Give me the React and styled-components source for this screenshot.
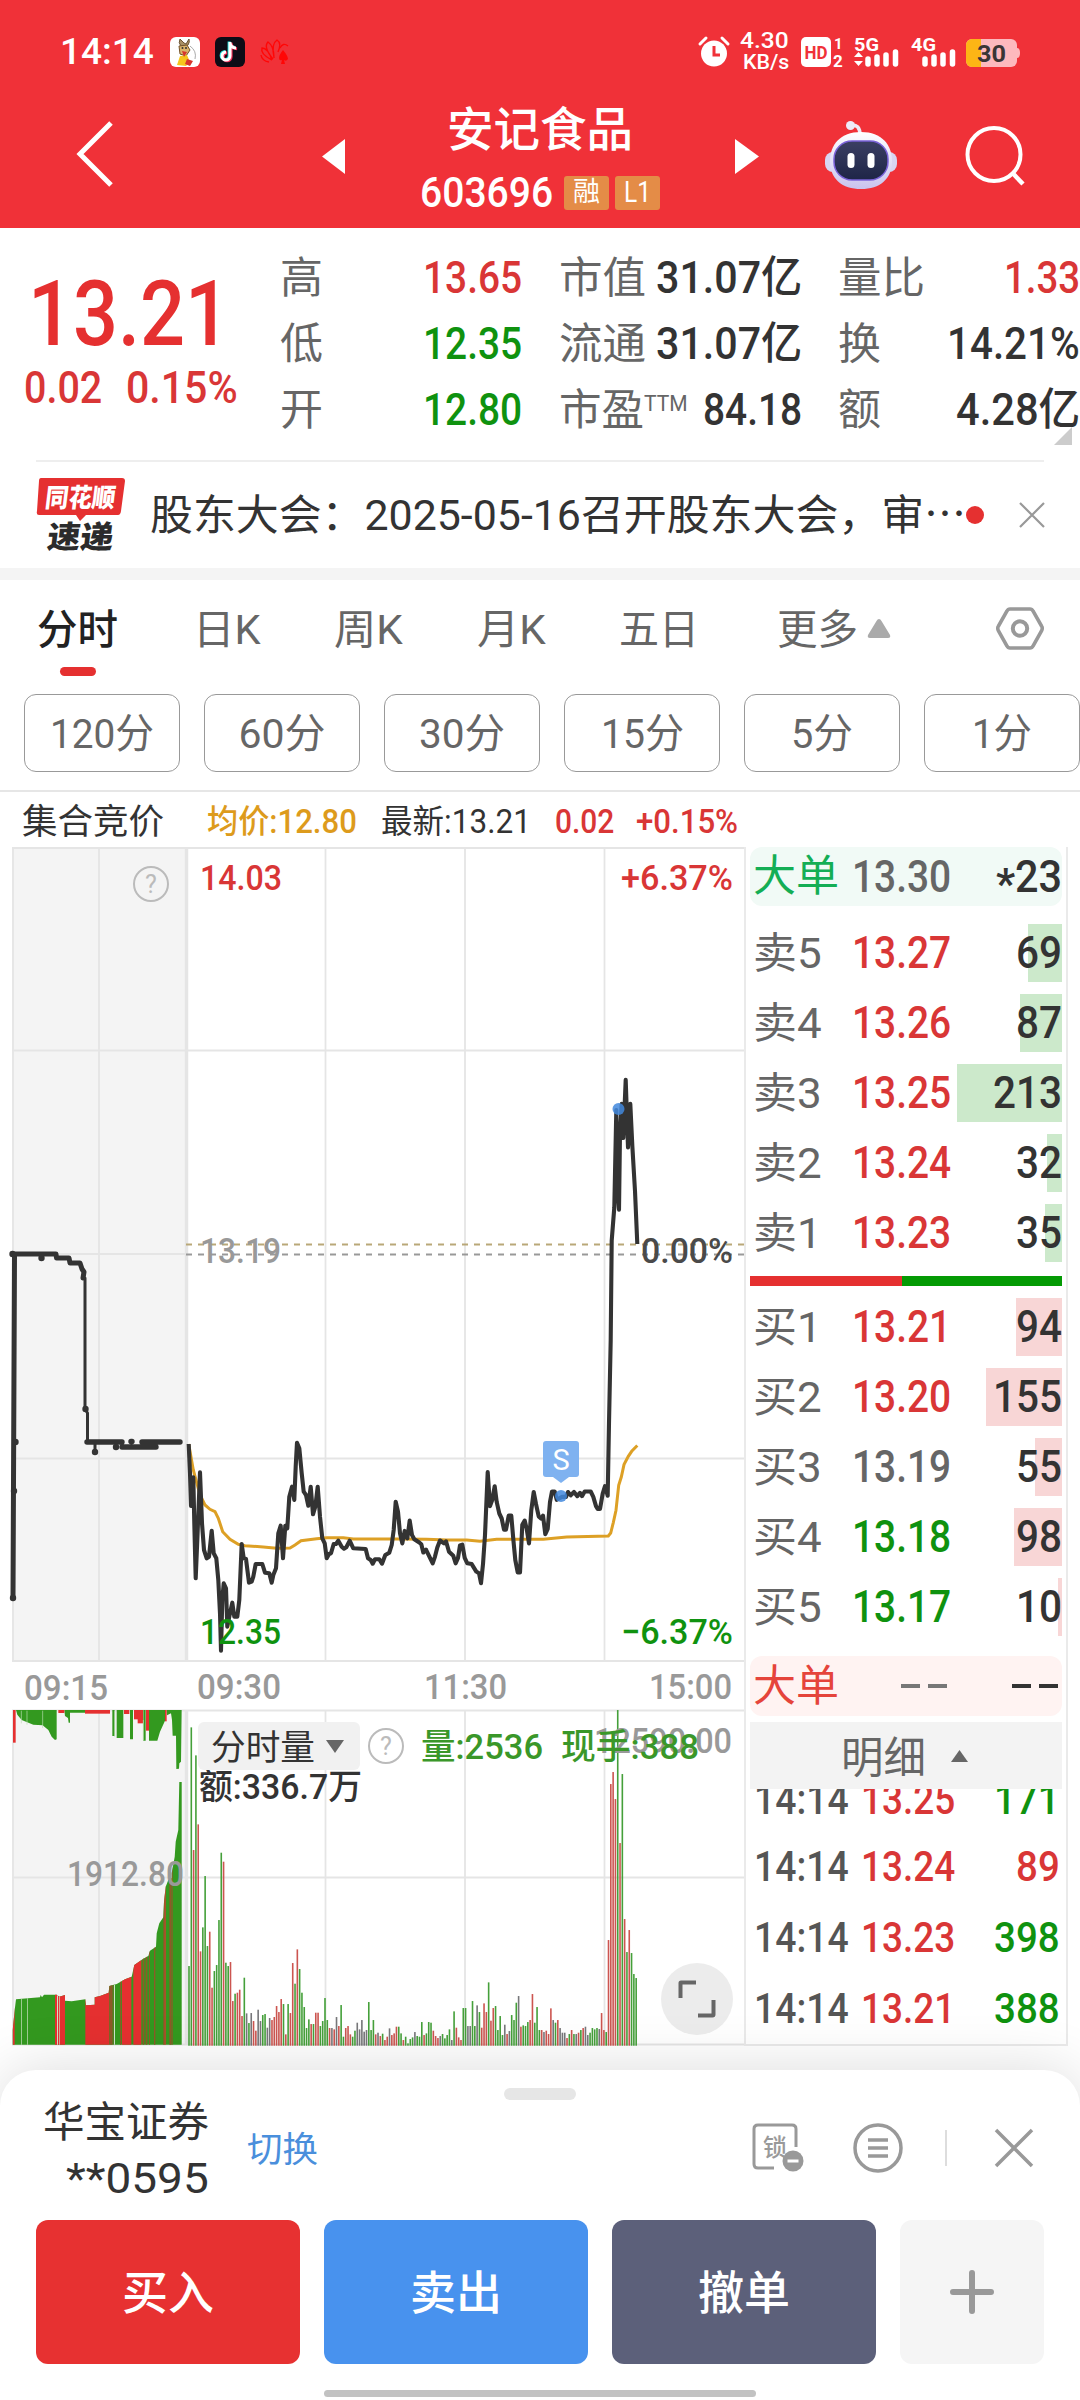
import React, { useLayoutEffect, useRef, useState } from "react";
import styled, { createGlobalStyle } from "styled-components";

const RED = "#d93636";
const GREEN = "#0f920f";
const INK = "#333";
const GREY = "#666";

const Global = createGlobalStyle`
  * { box-sizing: border-box; }
  body { margin: 0; background: #fff; font-family: Roboto, "Noto Sans CJK SC", sans-serif; }
  svg { overflow: visible; flex: none; }
`;

const Screen = styled.div`
  width: 1080px;
  height: 2400px;
  overflow: hidden;
  background: #fff;
  display: flex;
  flex-direction: column;
`;

/* ---------- condensed text ---------- */

const FitBox = styled.span`
  display: block;
  flex: none;
  width: ${(p) => p.$w}px;
  height: ${(p) => p.$size}px;
  line-height: ${(p) => p.$size}px;
  font-size: ${(p) => p.$size}px;
  font-weight: ${(p) => p.$weight};
  color: ${(p) => p.$color};
  margin-left: ${(p) => p.$ml || 0}px;
  position: relative;
  top: ${(p) => p.$dy || 0}px;
  white-space: pre;
`;
const FitInner = styled.span`
  display: inline-block;
  transform-origin: left center;
`;

function Fit({ w, size = 44, weight = 500, color = INK, ml, dy, children }) {
  const ref = useRef(null);
  const [scale, setScale] = useState(1);
  useLayoutEffect(() => {
    setScale(w / ref.current.offsetWidth);
  }, [w, size, children]);
  return (
    <FitBox $w={w} $size={size} $weight={weight} $color={color} $ml={ml} $dy={dy}>
      <FitInner ref={ref} style={{ transform: `scaleX(${scale})` }}>{children}</FitInner>
    </FitBox>
  );
}

/* ---------- header ---------- */

const Header = styled.header`
  flex: none;
  height: 228px;
  background: #f03138;
  display: flex;
  flex-direction: column;
`;
const StatusBar = styled.div`
  height: 100px;
  display: flex;
  align-items: center;
  padding: 3px 60px 0 60px;
`;
const Spacer = styled.div`
  flex: 1;
`;
const NetSpeed = styled.div`
  display: flex;
  flex-direction: column;
  align-items: flex-end;
  width: 60px;
  margin-right: 12px;
`;
const TitleBar = styled.div`
  height: 128px;
  display: flex;
  align-items: flex-start;
`;
const TitleBlock = styled.div`
  width: 390px;
  display: flex;
  flex-direction: column;
  align-items: center;
  padding-top: 5px;
`;
const CodeRow = styled.div`
  display: flex;
  align-items: center;
  margin-top: 20px;
`;
const Badge = styled.span`
  width: 45px;
  height: 34px;
  border-radius: 3px;
  background: #e48c47;
  display: flex;
  align-items: center;
  justify-content: center;
  margin-left: ${(p) => p.$ml}px;
`;

const RabbitIcon = () => (
  <svg width="30" height="30" viewBox="0 0 30 30">
    <rect width="30" height="30" rx="6" fill="#fff" />
    <path d="M10 2q-2 4 1 7l3 1 4-2q2-3 1-6l-3 5-2-1z" fill="#a89066" stroke="#6b5535" strokeWidth="1" />
    <path d="M9 9l8-1 3 5-4 6-6-2z" fill="#d9b26a" stroke="#73522a" strokeWidth="1" />
    <path d="M10 19l7-1 3 7-4 4-9-1z" fill="#f6c51c" />
    <path d="M12 14l5 1-3 5zM17 22l6 2-3 5-5-2z" fill="#d8352c" />
    <path d="M20 9q7 5 5 13" fill="none" stroke="#aaa" strokeWidth="1" />
    <circle cx="12.500" cy="11" r="1" fill="#333" />
    <circle cx="16" cy="11" r="1" fill="#333" />
  </svg>
);
const TikTokIcon = () => (
  <svg width="30" height="30" viewBox="0 0 30 30">
    <rect width="30" height="30" rx="6" fill="#0d0c16" />
    <g fill="none" strokeWidth="3">
      <path d="M15 5v14a4 4 0 1 1-4-4M15 6q1 5 6 5" stroke="#25e6e2" transform="translate(-.9 -.6)" />
      <path d="M15 5v14a4 4 0 1 1-4-4M15 6q1 5 6 5" stroke="#f5305a" transform="translate(1.1 .8)" />
      <path d="M15 5v14a4 4 0 1 1-4-4M15 6q1 5 6 5" stroke="#fff" />
    </g>
  </svg>
);
const FlowerIcon = () => (
  <svg width="30" height="26" viewBox="0 0 30 26">
    <g fill="none" stroke="#ff0606" strokeWidth="1.400">
      <path d="M12 21Q0 15 2 9Q8 9 12 21M13 20Q3 8 8 3Q14 7 14 19M14 18Q11 5 17 1Q22 4 18 13" />
      <path d="M9 23Q2 22 1 16M20 9Q23 3 28 7" />
    </g>
    <path d="M23 11q5 6 5 9q-2 3-4 1l1 4h-4l1-4q-3 1-3-2q0-3 4-8z" fill="#ff0606" />
  </svg>
);
const AlarmIcon = () => (
  <svg width="30" height="32" viewBox="0 0 30 32">
    <circle cx="15" cy="17.500" r="13" fill="#fff" />
    <path d="M1 8l6-6M29 8l-6-6" stroke="#fff" strokeWidth="3" strokeLinecap="round" />
    <path d="M15 10v9h6" fill="none" stroke="#f03138" strokeWidth="3" />
  </svg>
);
const HdIcon = () => (
  <svg width="42" height="32" viewBox="0 0 42 32">
    <rect x="0" y="1" width="30" height="30" rx="5" fill="#fff" />
    <text x="3.500" y="23" fontSize="19" fontWeight="700" fill="#f03138" textLength="23" lengthAdjust="spacingAndGlyphs">HD</text>
    <text x="33" y="13" fontSize="15" fontWeight="700" fill="#fff">1</text>
    <text x="32" y="31" fontSize="17" fontWeight="700" fill="#fff">2</text>
  </svg>
);
const SignalIcon = ({ label, arrows }) => (
  <svg width="46" height="32" viewBox="0 0 46 32">
    <text x="0" y="14.500" fontSize="18" fontWeight="700" fill="#fff" textLength="25" lengthAdjust="spacingAndGlyphs">{label}</text>
    {arrows && <path d="M0 21l4.500-5 4.500 5zM0 25l4.500 5 4.500-5z" fill="#fff" />}
    <path d="M14 28v-5M23 28v-7M32 28v-9M41.500 28v-12" stroke="#fff" strokeWidth="5.500" strokeLinecap="round" />
  </svg>
);
const BatteryIcon = () => (
  <svg width="54" height="28" viewBox="0 0 54 28">
    <rect x="0" y="0" width="51" height="28" rx="6" fill="#fdb9be" />
    <path d="M6 0h9v28H6a6 6 0 0 1-6-6V6a6 6 0 0 1 6-6z" fill="#fdb515" />
    <path d="M51 9q3 0 3 5t-3 5z" fill="#fdb9be" />
    <text x="11" y="22.500" fontSize="24" fontWeight="700" fill="#3a3535" textLength="29" lengthAdjust="spacingAndGlyphs">30</text>
  </svg>
);
const RobotIcon = () => (
  <svg width="74" height="72" viewBox="0 0 74 72">
    <defs>
      <linearGradient id="shell" x1="0" y1="0" x2="0" y2="1">
        <stop offset="0" stopColor="#fff" />
        <stop offset="1" stopColor="#c9c3ee" />
      </linearGradient>
      <linearGradient id="visor" x1="0" y1="0" x2="0" y2="1">
        <stop offset="0" stopColor="#3b3f63" />
        <stop offset="1" stopColor="#1e2547" />
      </linearGradient>
    </defs>
    <path d="M27 6Q36 5 36 16" fill="none" stroke="#eeeaf8" strokeWidth="3.500" />
    <circle cx="26.500" cy="6.500" r="4.500" fill="#eeeaf8" />
    <rect x="1" y="33" width="72" height="20" rx="8" fill="#d8d5f2" />
    <path d="M37 13C58 13 68 26 68 42C68 60 56 70 37 70C18 70 6 60 6 42C6 26 16 13 37 13z" fill="url(#shell)" />
    <rect x="10" y="22" width="54" height="39" rx="18" fill="url(#visor)" stroke="#7a62d8" strokeWidth="1.500" />
    <rect x="23.500" y="34" width="7" height="15" rx="3.500" fill="#fff" />
    <rect x="43.500" y="34" width="7" height="15" rx="3.500" fill="#fff" />
  </svg>
);

const IconSlot = styled.div`
  margin-left: ${(p) => p.$ml || 0}px;
  margin-top: ${(p) => p.$mt || 0}px;
  flex: none;
  line-height: 0;
`;

function TopHeader() {
  return (
    <Header>
      <StatusBar>
        <Fit w={94} size={37} color="#fff">14:14</Fit>
        <IconSlot $ml={16}><RabbitIcon /></IconSlot>
        <IconSlot $ml={15}><TikTokIcon /></IconSlot>
        <IconSlot $ml={15}><FlowerIcon /></IconSlot>
        <Spacer />
        <IconSlot><AlarmIcon /></IconSlot>
        <NetSpeed>
          <Fit w={49} size={22} color="#fff" dy={-1}>4.30</Fit>
          <Fit w={46} size={20} color="#fff" dy={-1}>KB/s</Fit>
        </NetSpeed>
        <IconSlot><HdIcon /></IconSlot>
        <IconSlot $ml={11}><SignalIcon label="5G" arrows /></IconSlot>
        <IconSlot $ml={11}><SignalIcon label="4G" /></IconSlot>
        <IconSlot $ml={9} $mt={3}><BatteryIcon /></IconSlot>
      </StatusBar>
      <TitleBar>
        <IconSlot $ml={74} $mt={18}>
          <svg width="42" height="70" viewBox="0 0 42 70"><path d="M37 5L6 36L37 67" fill="none" stroke="#fff" strokeWidth="5" /></svg>
        </IconSlot>
        <IconSlot $ml={206} $mt={39}>
          <svg width="23" height="35"><path d="M23 0v35L0 17.500z" fill="#fff" /></svg>
        </IconSlot>
        <TitleBlock>
          <Fit w={186} size={46.500} color="#fff" dy={2}>安记食品</Fit>
          <CodeRow>
            <Fit w={133} size={42} color="#fff">603696</Fit>
            <Badge $ml={11}><Fit w={27} size={27} weight={400} color="#fff">融</Fit></Badge>
            <Badge $ml={6}><Fit w={27} size={29} weight={400} color="#fff">L1</Fit></Badge>
          </CodeRow>
        </TitleBlock>
        <IconSlot $mt={39}>
          <svg width="24" height="35"><path d="M0 0v35L24 17.500z" fill="#fff" /></svg>
        </IconSlot>
        <IconSlot $ml={65} $mt={19}><RobotIcon /></IconSlot>
        <IconSlot $ml={65} $mt={24}>
          <svg width="64" height="64" viewBox="0 0 64 64">
            <circle cx="31" cy="30.500" r="26.500" fill="none" stroke="#fff" strokeWidth="4" />
            <path d="M50 49.500L60 60" stroke="#fff" strokeWidth="4.500" />
          </svg>
        </IconSlot>
      </TitleBar>
    </Header>
  );
}

/* ---------- quote ---------- */

const Quote = styled.section`
  flex: none;
  height: 232px;
  display: flex;
  position: relative;
`;
const PriceCol = styled.div`
  width: 280px;
  padding-top: 41px;
`;
const ChangeRow = styled.div`
  display: flex;
  margin-top: 6px;
  padding-left: 24px;
  gap: 24px;
`;
const StatCol = styled.div`
  width: ${(p) => p.$w}px;
  margin-right: ${(p) => p.$mr || 0}px;
  padding-top: 17px;
  display: flex;
  flex-direction: column;
`;
const StatRow = styled.div`
  height: 66px;
  display: flex;
  align-items: center;
  justify-content: space-between;
`;
const StatLabel = styled.div`
  display: flex;
`;
const CornerMark = styled.svg`
  position: absolute;
  right: 8px;
  bottom: 15px;
`;
const Divider = styled.div`
  flex: none;
  height: 2px;
  margin: 0 36px;
  background: #eee;
`;

const STATS = [
  { w: 242, mr: 37, rows: [["高", 43, "13.65", 99, RED], ["低", 43, "12.35", 99, GREEN], ["开", 43, "12.80", 99, GREEN]] },
  { w: 243, mr: 36, rows: [["市值", 87, "31.07亿", 146, INK], ["流通", 87, "31.07亿", 146, INK], ["市盈", 85, "84.18", 99, INK, "TTM"]] },
  { w: 242, mr: 0, rows: [["量比", 87, "1.33", 76, RED], ["换", 43, "14.21%", 133, INK], ["额", 43, "4.28亿", 124, INK]] },
];

function QuotePanel() {
  return (
    <Quote>
      <PriceCol>
        <Fit w={202} size={91} color="#e53030" ml={28}>13.21</Fit>
        <ChangeRow>
          <Fit w={78} color={RED}>0.02</Fit>
          <Fit w={112} color={RED}>0.15%</Fit>
        </ChangeRow>
      </PriceCol>
      {STATS.map((col, i) => (
        <StatCol key={i} $w={col.w} $mr={col.mr}>
          {col.rows.map(([label, lw, value, vw, color, sup]) => (
            <StatRow key={label}>
              <StatLabel>
                <Fit w={lw} size={43} weight={400} color={GREY}>{label}</Fit>
                {sup && <Fit w={44} size={22} weight={400} color={GREY} dy={4}>{sup}</Fit>}
              </StatLabel>
              <Fit w={vw} color={color}>{value}</Fit>
            </StatRow>
          ))}
        </StatCol>
      ))}
      <CornerMark width="18" height="18"><path d="M18 0v18H0z" fill="#ccc" /></CornerMark>
    </Quote>
  );
}

/* ---------- news ---------- */

const News = styled.section`
  flex: none;
  height: 106px;
  display: flex;
  align-items: center;
  padding: 0 36px;
`;
const Dot = styled.span`
  flex: none;
  width: 18px;
  height: 18px;
  border-radius: 50%;
  background: #e53030;
  margin-right: 36px;
`;
const Band = styled.div`
  flex: none;
  height: 12px;
  background: #f4f4f4;
`;
const NewsLogo = () => (
  <svg width="92" height="76" viewBox="0 0 92 76">
    <path d="M5 1H86Q89 1 89 4L85 34Q84.500 38 82 38H50L44 44L40 38H3Q0 38 1 34L3 4Q3 1 5 1z" fill="#e53030" />
    <g transform="skewX(-7)" fontWeight="900">
      <text x="12" y="30" fontSize="26" fill="#fff" textLength="70" lengthAdjust="spacingAndGlyphs">同花顺</text>
      <text x="19" y="71" fontSize="31" fill="#2b2b2b" textLength="66" lengthAdjust="spacingAndGlyphs">速递</text>
    </g>
  </svg>
);
const NewsBar = () => (
  <News>
    <NewsLogo />
    <Fit w={774} size={42} weight={400} ml={22} dy={1}>股东大会：2025-05-16召开股东大会，审</Fit>
    <Fit w={42} size={42} weight={400}>⋯</Fit>
    <Dot />
    <svg width="24" height="24"><path d="M0 0L24 24M24 0L0 24" stroke="#999" strokeWidth="2.200" /></svg>
  </News>
);

/* ---------- period tabs ---------- */

const Tabs = styled.nav`
  flex: none;
  height: 96px;
  display: flex;
  align-items: flex-start;
  padding: 28px 0 0 37px;
`;
const Tab = styled.div`
  width: ${(p) => p.$slot}px;
  display: flex;
  flex-direction: column;
`;
const TabInline = styled.div`
  display: flex;
  align-items: center;
`;
const Underline = styled.span`
  width: 36px;
  height: 9px;
  border-radius: 5px;
  background: #e53030;
  margin: 18px 0 0 23px;
`;
const Chips = styled.div`
  flex: none;
  height: 114px;
  padding: 18px 0 0 24px;
  display: flex;
  gap: 24px;
`;
const Chip = styled.div`
  flex: none;
  width: 156px;
  height: 78px;
  border: 1.5px solid #999;
  border-radius: 12px;
  display: flex;
  align-items: center;
  justify-content: center;
`;
const TABS = [["分时", 81, 156], ["日K", 68, 141], ["周K", 69, 143], ["月K", 69, 142], ["五日", 80, 158], ["更多", 81, 217]];
const CHIPS = [["120分", 104], ["60分", 87], ["30分", 86], ["15分", 83], ["5分", 62], ["1分", 60]];

const PeriodTabs = () => (
  <>
    <Tabs>
      {TABS.map(([label, w, slot], i) => (
        <Tab key={label} $slot={slot}>
          <TabInline>
            <Fit w={w} size={41} weight={i ? 400 : 500} color={i ? GREY : "#222"} dy={1.5}>{label}</Fit>
            {label === "更多" && (
              <IconSlot $ml={9}>
                <svg width="24" height="19"><path d="M12 0q1.500 0 2.500 2L23 16q1 3-2 3H3q-3 0-2-3L9.500 2Q10.500 0 12 0z" fill="#aaa" /></svg>
              </IconSlot>
            )}
          </TabInline>
          {i === 0 && <Underline />}
        </Tab>
      ))}
      <IconSlot $mt={-3}>
        <svg width="52" height="48" viewBox="0 0 52 48">
          <path d="M16 4H36Q38 4 39 6L47.500 21Q49 23 47.500 26L39 41Q38 43 36 43H16Q14 43 13 41L4.500 26Q3 23 4.500 21L13 6Q14 4 16 4z" fill="none" stroke="#999" strokeWidth="3.600" />
          <circle cx="26" cy="23.500" r="7.200" fill="none" stroke="#999" strokeWidth="4" />
        </svg>
      </IconSlot>
    </Tabs>
    <Chips>
      {CHIPS.map(([label, w]) => (
        <Chip key={label}><Fit w={w} size={41} weight={400} color={GREY} dy={1.5}>{label}</Fit></Chip>
      ))}
    </Chips>
  </>
);

const Legend = styled.div`
  flex: none;
  height: 57px;
  border-top: 2px solid #e6e6e6;
  display: flex;
  align-items: center;
  padding: 3px 0 0 22px;
`;
const LegendRow = () => (
  <Legend>
    <Fit w={142} size={35} weight={400} dy={1}>集合竞价</Fit>
    <Fit w={150} size={33} color="#dd9b1c" ml={43}>均价:12.80</Fit>
    <Fit w={150} size={33} ml={24} weight={400}>最新:13.21</Fit>
    <Fit w={59} size={33} ml={24} color={RED}>0.02</Fit>
    <Fit w={102} size={33} ml={22} color={RED}>+0.15%</Fit>
  </Legend>
);

/* ---------- charts ---------- */

const plot = (pts, ox, oy, sx, sy) => pts.map(([x, y]) => `${(ox + x / sx).toFixed(1)},${(oy + y / sy).toFixed(1)}`).join(" ");

const MORNING = [[566,612],[570,700],[573,798],[580,712],[583,850],[587,1015],[592,900],[600,697],[606,850],[612,930],[620,955],[627,950],[635,872],[641,940],[649,955],[655,1020],[660,1120],[663,1232],[667,1080],[671,1030],[678,1045],[682,1160],[688,1130],[697,1088],[703,1130],[712,1130],[718,1080],[725,912],[731,955],[738,957],[747,1028],[755,1025],[760,1010],[767,972],[787,972],[795,998],[808,1000],[815,1028],[820,1005],[828,985],[835,880],[842,857],[849,955],[856,857],[862,865],[868,770],[876,740],[883,780],[887,680],[891,608],[898,625],[905,700],[911,755],[918,765],[925,797],[932,740],[939,823],[946,800],[953,740],[960,830],[967,895],[974,910],[980,955],[987,942],[993,940],[1001,912],[1008,912],[1015,902],[1025,920],[1032,926],[1039,922],[1049,902],[1060,925],[1097,927],[1104,955],[1112,960],[1118,971],[1125,958],[1138,958],[1146,971],[1156,945],[1168,938],[1175,915],[1181,870],[1187,785],[1194,815],[1200,880]];
const AFTERNOON = [[67,1190],[74,1160],[82,1178],[89,1135],[96,1170],[103,1180],[118,1188],[124,1192],[130,1212],[138,1205],[150,1225],[158,1238],[165,1222],[172,1200],[180,1183],[192,1190],[198,1185],[207,1210],[220,1220],[227,1238],[234,1225],[240,1195],[247,1193],[254,1225],[262,1238],[275,1240],[289,1258],[297,1262],[303,1286],[309,1240],[315,1170],[323,1018],[330,1100],[337,1085],[344,1052],[350,1090],[358,1118],[365,1130],[372,1157],[378,1157],[386,1123],[394,1123],[400,1180],[406,1230],[413,1260],[420,1260],[427,1145],[434,1135],[440,1155],[447,1190],[454,1110],[461,1066],[468,1095],[476,1125],[483,1130],[489,1123],[496,1168],[503,1155],[510,1090],[516,1065],[524,1065],[530,1085],[545,1078],[558,1078],[564,1066],[572,1074],[582,1066],[592,1076],[600,1068],[606,1076],[614,1065],[632,1065],[640,1078],[648,1100],[653,1107],[660,1107],[668,1070],[675,1052],[683,1075],[687,900],[692,700],[695,460],[703,380],[709,145],[713,340],[717,385],[720,200],[725,130],[730,212],[737,72],[744,235],[751,130],[757,230],[765,340],[772,468]];
const AVG_AM = [[566,612],[580,690],[600,765],[615,795],[630,808],[645,815],[655,835],[668,875],[690,898],[715,913],[735,917],[790,921],[830,925],[870,924],[885,915],[903,902],[950,896],[980,893],[1030,893],[1060,897],[1200,897]];
const AVG_PM = [[140,1180],[200,1182],[260,1182],[300,1185],[350,1180],[490,1180],[560,1175],[685,1172],[692,1165],[700,1140],[708,1110],[716,1050],[724,1030],[732,1000],[745,980],[755,968],[772,954]];

const PRICE_LINE = `${plot(MORNING, 0, 1240, 3, 3)} ${plot(AFTERNOON, 380, 1050, 3, 2.412)}`;
const AVG_LINE = `${plot(AVG_AM, 0, 1240, 3, 3)} ${plot(AVG_PM, 380, 1050, 3, 2.412)}`;

const VOLUME = "828g 112g 480r 196g 403r 784r 712g 558g 768g 725r 893r 843g 825g 690g 488g 515r 818g 828g 816r 933r 911g 908r 899r 978r 863g 970k 999g 969k 993r 1022r 959k 993k 975g 972g 1013k 984k 990r 981r 948r 966r 927r 942g 1033r 942g 969r 819r 881g 778r 837g 908g 951g 1014g 988g 1002r 1002g 968r 968r 1008g 993g 924g 990g 1014r 1014k 1018r 981k 1008r 945g 1040g 1014r 1008r 1033r 1040g 1022g 998k 1018k 990k 1025k 1020k 936g 1020g 990g 1033r 1028k 1038r 1031g 1050r 1040r 1015k 1035r 1030r 1010r 1010g 1030g 1050r 1040g 1060g 1047g 1042g 1026k 1038g 1040g 996g 1035r 1030g 996g 998g 1022r 1038r 1044r 1038k 1032g 1045g 1035g 1018g 1050k 964g 1013r 1042r 1050r 954g 954g 1008k 1008k 933g 1008g 946k 966g 1013r 940r 966r 877g 992r 954r 948g 1020g 978g 1035g 1004k 1032r 1023k 975g 990g 938g 918k 1010r 1006g 1008g 996g 990r 912r 998g 951g 1020g 1020r 1026k 1022r 1032r 955r 990k 998g 990r 1014k 1028k 1028k 1044r 1032g 1020r 1032g 1032k 1028r 1020g 1014r 1010k 1035k 1028g 1014g 1018g 1014g 1017k 969r 1020r 1026g 750r 282r 246r 327r 60g 459r 252g 687r 786g 720r 789g 852g 864g"
  .split(" ")
  .map((s, i) => ({ x: 188.2 + i * 2.305, h: (1067 - parseInt(s, 10)) / 3, c: { g: "#45a03a", r: "#cc5550", k: "#77777a" }[s.slice(-1)] }));

const AUCTION = [[38,1064],[38,1020],[44,960],[48,928],[120,922],[122,915],[126,922],[132,914],[170,914],[178,920],[195,915],[195,932],[215,934],[256,928],[258,946],[284,944],[284,922],[300,918],[326,908],[328,888],[350,882],[375,868],[395,860],[403,825],[430,806],[445,798],[450,782],[468,770],[470,730],[478,700],[490,682],[492,635],[497,590],[505,570],[515,565],[515,550],[524,500],[527,455],[535,420],[538,276],[545,276],[545,1064]];
const AUCTION_RED = [[38,6],[165,30],[256,72],[366,28],[400,24],[493,4]];
const AUCTION_MIX = [[328,10],[341,3],[360,4],[428,5],[437,5],[447,3],[462,4],[508,7],[517,2],[490,3]];
const AUCTION_GAP = [[64,2],[81,2],[171,3],[178,2],[342,3]];
const HANGING_G = "48,60 52,74 65,90 100,104 128,106 145,120 155,140 165,150 170,148 170,60 193,60 195,78 204,84 206,98 210,98 210,68 255,68 255,60 337,60 337,138 344,138 344,60 350,60 350,144 370,144 370,60 390,60 390,148 399,148 399,60 430,60 430,152 437,152 437,60 447,60 447,152 472,152 480,125 495,92 496,60 500,60 501,76 513,70 516,90 518,137 528,137 529,237 537,236 538,220 543,215 545,60";
const HANGING_R = [[39,8,98],[175,18,9],[255,75,11],[372,16,12],[402,13,28],[413,16,40],[438,9,62],[495,5,34]];

const Label = ({ x, y, w, size = 35.5, color = "#999", weight = 500, children }) => (
  <text x={x} y={y} fontSize={size} fill={color} fontWeight={weight} textLength={w} lengthAdjust="spacingAndGlyphs">{children}</text>
);
const Help = ({ cx, cy }) => (
  <g>
    <circle cx={cx} cy={cy} r="17" fill="none" stroke="#bbb" strokeWidth="2" />
    <text x={cx} y={cy + 9} fontSize="25" fill="#bbb" textAnchor="middle">?</text>
  </g>
);

const ChartArea = styled.div`
  position: relative;
  width: 744px;
  height: 1199px;
  flex: none;
`;
const VolumePicker = styled.div`
  position: absolute;
  left: 198px;
  top: 875px;
  width: 162px;
  height: 48px;
  border-radius: 6px;
  background: #f1f1f1;
  display: flex;
  align-items: center;
  padding-left: 13px;
  gap: 11px;
`;
const ExpandButton = styled.div`
  position: absolute;
  left: 661px;
  top: 1116px;
  width: 72px;
  height: 72px;
  border-radius: 50%;
  background: #ececec;
`;

const Charts = () => (
  <ChartArea>
    <svg width="744" height="1199" viewBox="0 847 744 1199" fontFamily='Roboto, "Noto Sans CJK SC", sans-serif'>
      <rect x="12" y="847" width="175" height="814" fill="#f4f4f4" />
      <rect x="12" y="1710" width="175" height="335" fill="#f4f4f4" />
      <g stroke="#e5e5e5" strokeWidth="1.800" fill="none">
        <path d="M12 848H744M12 1050.500H744M12 1254H187M12 1458.500H744M12 1661H744M12 1710.500H744M12 1877.500H744M12 2044.500H744" />
        <path d="M13 847V1661M99 847V1661M325.500 847V1661M465 847V1661M604.500 847V1661M13 1710V2045M99 1710V2045M325.500 1710V2045M465 1710V2045M604.500 1710V2045" />
        <path d="M186.500 847V1661M186.500 1710V2045" strokeWidth="3.500" />
      </g>
      <path d="M186 1244.500H744" stroke="#b9a878" strokeWidth="1.800" strokeDasharray="6 6" />
      <path d="M186 1254.500H744" stroke="#999" strokeWidth="1.800" strokeDasharray="6 6" />
      <Help cx={151} cy={884} />

      <g fill="none" stroke="#333" strokeLinecap="round" strokeLinejoin="round">
        <path d="M13 1598L14.500 1254H56L56.500 1258H69L70 1263H80L82 1269L84 1272L83 1278" strokeWidth="5" />
        <path d="M85 1278V1409L87.500 1413V1442M95 1442V1452" strokeWidth="3" />
        <path d="M87 1442H122M142 1442H180M131 1441.500H132M122 1447H156" strokeWidth="5.400" />
      </g>
      <g fill="#333">
        {[[41.5, 1258], [95, 1452], [116, 1447], [15.5, 1442], [14, 1491], [13, 1598], [85.5, 1409], [12.5, 1254]].map(([x, y]) => (
          <circle key={`${x}-${y}`} cx={x} cy={y} r="3.200" />
        ))}
      </g>

      <polyline points={AVG_LINE} fill="none" stroke="#dda025" strokeWidth="3" />
      <polyline points={PRICE_LINE} fill="none" stroke="#333" strokeWidth="4.100" strokeLinejoin="round" />

      <rect x="543" y="1441" width="36" height="36" rx="3" fill="#7fb2f0" />
      <path d="M553 1477h16l-8 6z" fill="#7fb2f0" />
      <text x="561" y="1470" fontSize="29" fill="#fff" textAnchor="middle">S</text>
      <circle cx="561" cy="1496" r="6" fill="#4288dd" fillOpacity=".85" />
      <circle cx="618.500" cy="1109" r="6" fill="#4288dd" fillOpacity=".85" />

      <Label x={200} y={890} w={82} color={RED}>14.03</Label>
      <Label x={621} y={890} w={112} color={RED}>+6.37%</Label>
      <Label x={200} y={1263} w={81}>13.19</Label>
      <Label x={641} y={1263} w={92} color="#4a4a4a">0.00%</Label>
      <Label x={200} y={1644} w={81} color={GREEN}>12.35</Label>
      <Label x={621} y={1644} w={112} color={GREEN}>−6.37%</Label>

      <Label x={24} y={1700} w={84}>09:15</Label>
      <Label x={197} y={1699} w={84}>09:30</Label>
      <Label x={424} y={1699} w={83}>11:30</Label>
      <Label x={649} y={1699} w={83}>15:00</Label>

      <polygon points={plot(AUCTION, 0, 1690, 3, 3)} fill="#33991f" />
      <clipPath id="auction"><polygon points={plot(AUCTION, 0, 1690, 3, 3)} /></clipPath>
      <g clipPath="url(#auction)">
        {AUCTION_RED.map(([x, w]) => <rect key={x} x={x / 3} y="1780" width={w / 3} height="265" fill="#e53030" />)}
        {AUCTION_MIX.map(([x, w]) => <rect key={x} x={x / 3} y="1780" width={w / 3} height="265" fill="#8c5a28" />)}
        {AUCTION_GAP.map(([x, w]) => <rect key={x} x={x / 3} y="1780" width={w / 3} height="265" fill="#cfe3ca" />)}
      </g>
      <g transform="translate(0 1690) scale(.33333)">
        <polygon points={HANGING_G} fill="#33991f" />
        {HANGING_R.map(([x, w, h]) => <rect key={x} x={x} y="60" width={w} height={h} fill="#e53030" />)}
        <path d="M64 62V100M81 62V104M128 62V114M344 62V140M430 90V150" stroke="#b9dcb2" strokeWidth="2" />
      </g>

      <Label x={67} y={1886} w={117}>1912.80</Label>
      <g>
        {VOLUME.map((b, i) => <rect key={i} x={b.x} y={2045.7 - b.h} width="1.600" height={b.h} fill={b.c} />)}
      </g>
      <Label x={594} y={1753} w={138}>12590.00</Label>
      <Label x={421} y={1759} w={122} color="#3a9729">量:2536</Label>
      <Label x={561} y={1759} w={138} color="#3a9729">现手:388</Label>
      <Label x={199} y={1799} w={163} color={INK}>额:336.7万</Label>
      <Help cx={386} cy={1746} />
    </svg>
    <VolumePicker>
      <Fit w={104} size={35} weight={400} dy={2}>分时量</Fit>
      <svg width="18" height="13"><path d="M0 0H18L9 13z" fill="#666" /></svg>
    </VolumePicker>
    <ExpandButton>
      <svg width="72" height="72" fill="none" stroke="#666" strokeWidth="4"><path d="M19.500 35V20Q19.500 19.500 20 19.500H35M52.500 37V51.500Q52.500 52.500 51.500 52.500H37" /></svg>
    </ExpandButton>
  </ChartArea>
);

/* ---------- order book ---------- */

const MarketArea = styled.section`
  flex: none;
  display: flex;
  height: 1199px;
`;
const Book = styled.div`
  width: 324px;
  height: 1199px;
  border: 2px solid #eaeaea;
  border-top-width: 0;
  padding: 0 4px;
  display: flex;
  flex-direction: column;
`;
const BigRow = styled.div`
  flex: none;
  height: ${(p) => p.$h}px;
  border-radius: 12px;
  background: ${(p) => p.$bg};
  display: flex;
  align-items: center;
  padding-left: 3px;
`;
const Levels = styled.div`
  flex: none;
  display: flex;
  flex-direction: column;
  gap: 12px;
  margin-top: ${(p) => p.$mt}px;
`;
const Level = styled.div`
  height: 58px;
  display: flex;
  align-items: center;
  padding-left: 3px;
  background: linear-gradient(${(p) => p.$bar}, ${(p) => p.$bar}) right / ${(p) => p.$len}px 100% no-repeat;
`;
const Balance = styled.div`
  flex: none;
  margin-top: 14px;
  height: 10px;
  background: linear-gradient(90deg, #e53030 0 152px, #049a04 152px);
`;
const DetailHead = styled.div`
  flex: none;
  height: 67px;
  margin-top: 6px;
  background: #f3f3f3;
  display: flex;
  align-items: center;
  padding-left: 91px;
  gap: 25px;
`;
const TickList = styled.div`
  flex: 1;
  min-height: 0;
  overflow: hidden;
  display: flex;
  flex-direction: column;
`;
const Tick = styled.div`
  flex: none;
  height: ${(p) => p.$h}px;
  display: flex;
  align-items: center;
  padding: 0 2px 0 4px;
`;
const Dashes = styled.span`
  display: flex;
  gap: 8px;
  margin-left: ${(p) => p.$ml}px;
  color: ${(p) => p.$c};
  &::before, &::after { content: ""; width: 19px; height: 3.5px; background: currentColor; }
`;

const SELL = [["卖5", "13.27", RED, "69", 34], ["卖4", "13.26", RED, "87", 42], ["卖3", "13.25", RED, "213", 105], ["卖2", "13.24", RED, "32", 15], ["卖1", "13.23", RED, "35", 17]];
const BUY = [["买1", "13.21", RED, "94", 46], ["买2", "13.20", RED, "155", 76], ["买3", "13.19", GREY, "55", 27], ["买4", "13.18", GREEN, "98", 48], ["买5", "13.17", GREEN, "10", 4]];
const TICKS = [["13.25", "171", GREEN], ["13.24", "89", RED], ["13.23", "398", GREEN], ["13.21", "388", GREEN]];

const LevelList = ({ rows, bar, mt }) => (
  <Levels $mt={mt}>
    {rows.map(([label, price, color, qty, len]) => (
      <Level key={label} $bar={bar} $len={len}>
        <Fit w={69} size={42} weight={400} color={GREY} dy={1}>{label}</Fit>
        <Fit w={99} color={color} ml={30}>{price}</Fit>
        <Spacer />
        <Fit w={qty.length * 23}>{qty}</Fit>
      </Level>
    ))}
  </Levels>
);

const OrderBook = () => (
  <Book>
    <BigRow $bg="#f1faf6" $h={59}>
      <Fit w={86} size={43} weight={400} color="#14ae55">大单</Fit>
      <Fit w={99} color={GREY} ml={13}>13.30</Fit>
      <Spacer />
      <Fit w={19} size={42} weight={700} dy={7}>*</Fit>
      <Fit w={47}>23</Fit>
    </BigRow>
    <LevelList rows={SELL} bar="#cce9cb" mt={18} />
    <Balance />
    <LevelList rows={BUY} bar="#f8d6d6" mt={12} />
    <Levels $mt={20}>
      <BigRow $bg="#fff3f2" $h={60}>
        <Fit w={86} size={43} weight={400} color="#e5443b">大单</Fit>
        <Dashes $ml={62} $c="#777" />
        <Dashes $ml={65} $c="#333" />
      </BigRow>
    </Levels>
    <DetailHead>
      <Fit w={85} size={43} weight={400} color={GREY} dy={3}>明细</Fit>
      <svg width="17" height="12"><path d="M0 12H17L8.500 0z" fill="#666" /></svg>
    </DetailHead>
    <TickList>
      {TICKS.map(([price, qty, color], i) => (
        <Tick key={price} $h={i ? 71 : 41}>
          <Fit w={95} size={42} color="#555" dy={i ? 1 : -10}>14:14</Fit>
          <Fit w={94} size={42} color={RED} ml={12} dy={i ? 1 : -10}>{price}</Fit>
          <Spacer />
          <Fit w={qty.length * 22} size={42} color={color} dy={i ? 1 : -10}>{qty}</Fit>
        </Tick>
      ))}
    </TickList>
  </Book>
);

/* ---------- trade sheet ---------- */

const Sheet = styled.section`
  flex: none;
  margin-top: 24px;
  height: 330px;
  border-radius: 36px 36px 0 0;
  background: #fff;
  box-shadow: 0 0 60px rgba(0, 0, 0, 0.14);
  position: relative;
  display: flex;
  flex-direction: column;
`;
const Handle = styled.div`
  width: 72px;
  height: 12px;
  border-radius: 6px;
  background: #e6e6e6;
  margin: 18px auto 0;
`;
const Account = styled.div`
  height: 120px;
  display: flex;
  align-items: center;
  padding: 0 47px 24px 43px;
`;
const AccountName = styled.div`
  width: 166px;
  display: flex;
  flex-direction: column;
  align-items: flex-end;
  gap: 14px;
`;
const Actions = styled.div`
  display: flex;
  gap: 24px;
  padding: 0 36px;
`;
const Action = styled.div`
  width: ${(p) => p.$w || 264}px;
  height: 144px;
  border-radius: 12px;
  background: ${(p) => p.$bg};
  display: flex;
  align-items: center;
  justify-content: center;
`;
const HomeBar = styled.div`
  width: 432px;
  height: 7px;
  border-radius: 4px;
  background: #c2c2c2;
  margin: 26px auto 0;
`;
const VRule = styled.span`
  width: 2px;
  height: 36px;
  margin: 0 48px 0 42px;
  background: #ddd;
`;

const TradeSheet = () => (
  <Sheet>
    <Handle />
    <Account>
      <AccountName>
        <Fit w={166} size={42} weight={400} dy={3.5}>华宝证券</Fit>
        <Fit w={143} size={43} weight={400} dy={2}>**0595</Fit>
      </AccountName>
      <Fit w={71} size={35} weight={400} color="#4a8fdc" ml={38} dy={2}>切换</Fit>
      <Spacer />
      <svg width="52" height="50" viewBox="0 0 52 50" fill="none" stroke="#999" strokeWidth="3">
        <path d="M22 45H6Q2 45 2 41V6Q2 2 6 2H40Q44 2 44 6V24" />
        <text x="11" y="33" fontSize="24" fill="#999" stroke="none" fontWeight="500">锁</text>
        <circle cx="41" cy="38" r="10.500" fill="#999" stroke="none" />
        <path d="M35.500 38h11" stroke="#fff" />
      </svg>
      <IconSlot $ml={49}>
        <svg width="50" height="50" fill="none" stroke="#999" strokeWidth="3.500">
          <circle cx="25" cy="25" r="23" />
          <path d="M15 17H35M15 25H35M15 33H35" />
        </svg>
      </IconSlot>
      <VRule />
      <svg width="38" height="38"><path d="M1 1L37 37M37 1L1 37" stroke="#999" strokeWidth="3.500" /></svg>
    </Account>
    <Actions>
      <Action $bg="#e73131"><Fit w={92} size={46} color="#fff" dy={1}>买入</Fit></Action>
      <Action $bg="#4892ee"><Fit w={92} size={46} color="#fff" dy={1}>卖出</Fit></Action>
      <Action $bg="#5c607a"><Fit w={92} size={46} color="#fff" dy={1}>撤单</Fit></Action>
      <Action $bg="#f5f5f5" $w={144}>
        <svg width="44" height="44"><path d="M22 3V41M3 22H41" stroke="#999" strokeWidth="6" strokeLinecap="round" /></svg>
      </Action>
    </Actions>
    <HomeBar />
  </Sheet>
);

export default function App() {
  return (
    <>
      <Global />
      <Screen>
        <TopHeader />
        <QuotePanel />
        <Divider />
        <NewsBar />
        <Band />
        <PeriodTabs />
        <LegendRow />
        <MarketArea>
          <Charts />
          <OrderBook />
        </MarketArea>
        <TradeSheet />
      </Screen>
    </>
  );
}
